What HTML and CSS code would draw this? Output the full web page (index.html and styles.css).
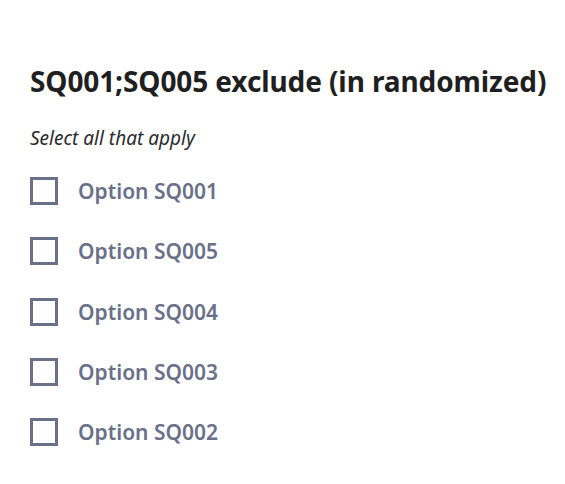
FILE: index.html
```
<!DOCTYPE html>
<html>
<head>
<meta charset="utf-8">
<link rel="stylesheet" href="styles.css">
</head>
<body>
<div class="question">
  <h1 class="title">SQ001;SQ005 exclude (in randomized)</h1>
  <p class="hint">Select all that apply</p>
  <ul class="options">
    <li class="option"><span class="box"></span><span class="label">Option SQ001</span></li>
    <li class="option"><span class="box"></span><span class="label">Option SQ005</span></li>
    <li class="option"><span class="box"></span><span class="label">Option SQ004</span></li>
    <li class="option"><span class="box"></span><span class="label">Option SQ003</span></li>
    <li class="option"><span class="box"></span><span class="label">Option SQ002</span></li>
  </ul>
</div>
</body>
</html>
```
FILE: styles.css
```
html, body {
  margin: 0;
  padding: 0;
  background: #ffffff;
}
body {
  font-family: "Noto Sans", "Liberation Sans", sans-serif;
}
.question {
  padding: 62px 0 0 30px;
}
.title {
  margin: 0;
  font-size: 28px;
  font-weight: 700;
  line-height: 38px;
  color: #1f1f22;
  letter-spacing: -0.1px;
}
.hint {
  margin: 26px 0 0 0;
  font-size: 19px;
  font-style: italic;
  line-height: 24px;
  color: #2a2a2e;
}
.options {
  list-style: none;
  margin: 27px 0 0 0;
  padding: 0;
  display: flex;
  flex-direction: column;
  gap: 32.3px;
}
.option {
  display: flex;
  align-items: center;
  gap: 20px;
  height: 28px;
}
.box {
  width: 28px;
  height: 28px;
  box-sizing: border-box;
  border: 3px solid #6b7089;
  flex: none;
}
.label {
  font-size: 21px;
  font-weight: 600;
  color: #6b7089;
}
```
